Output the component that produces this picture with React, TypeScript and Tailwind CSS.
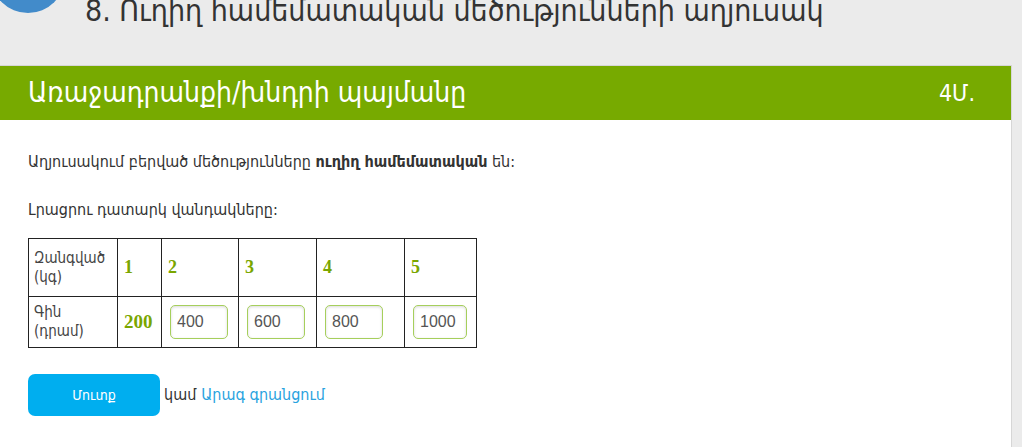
import React from "react";

const ARM = { fontFamily: '"DejaVu Sans Condensed", "DejaVu Sans", sans-serif' };

const AMOUNTS = ["1", "2", "3", "4", "5"];
const PRICES = ["400", "600", "800", "1000"];
const COL_W = ["w-[44px]", "w-[77px]", "w-[78px]", "w-[88px]", "w-[72px]"];

export default function App() {
  return (
    <div className="w-[1022px] h-[447px] overflow-hidden bg-[#ebebeb]" style={ARM}>
      <header className="relative flex items-start h-[65px]">
        <div className="absolute left-[-9px] top-[-61px] w-[74px] h-[74px] rounded-full bg-[#428bca]" />
        <h1 className="pl-[85px] -mt-[8px] text-[30px] leading-[38px] font-normal text-[#333] whitespace-nowrap">
          8. Ուղիղ համեմատական մեծությունների աղյուսակ
        </h1>
      </header>

      <section className="w-[1012px] border-r border-[#d6d6d6] bg-white">
        <div className="flex items-center justify-between h-[55px] pl-[28px] pr-[36px] bg-[#77aa00] border-t border-[#d6d6d6] text-white">
          <span className="text-[28px]">Առաջադրանքի/խնդրի պայմանը</span>
          <span className="text-[23px]">4Մ.</span>
        </div>

        <div className="px-[28px] pt-[32px] pb-[40px] text-[#333] text-[16px]">
          <p className="leading-[20px]">
            Աղյուսակում բերված մեծությունները <b>ուղիղ համեմատական</b> են:
          </p>
          <p className="leading-[20px] mt-[28px]">Լրացրու դատարկ վանդակները:</p>

          <table className="mt-[18px] border-collapse">
            <tbody>
              <tr className="h-[58px]">
                <td className="w-[89px] border border-[#222] px-[5px] text-[15px] leading-[19px] text-[#444]">
                  Զանգված
                  <br />
                  (կգ)
                </td>
                {AMOUNTS.map((a, i) => (
                  <td
                    key={a}
                    className={`border border-[#222] px-[6px] font-bold text-[18px] text-[#7aa600] ${COL_W[i]}`}
                    style={{ fontFamily: '"Liberation Serif", serif' }}
                  >
                    {a}
                  </td>
                ))}
              </tr>
              <tr className="h-[51px]">
                <td className="border border-[#222] px-[5px] text-[15px] leading-[19px] text-[#444]">
                  Գին
                  <br />
                  (դրամ)
                </td>
                <td
                  className="border border-[#222] px-[6px] font-bold text-[19px] text-[#7aa600]"
                  style={{ fontFamily: '"Liberation Serif", serif' }}
                >
                  200
                </td>
                {PRICES.map((p, i) => (
                  <td key={p} className="border border-[#222] px-[8px]">
                    <input
                      readOnly
                      value={p}
                      className={`h-[34px] px-[6px] rounded-[5px] border border-[#a6cf5c] shadow-[inset_0_1px_3px_rgba(0,0,0,0.15)] text-[16px] text-[#555] outline-none ${
                        i === 3 ? "w-[54px]" : "w-[58px]"
                      }`}
                      style={{ fontFamily: '"Liberation Sans", sans-serif' }}
                    />
                  </td>
                ))}
              </tr>
            </tbody>
          </table>

          <div className="flex items-center mt-[26px]">
            <button className="w-[132px] h-[42px] rounded-[7px] bg-[#00aeef] text-white text-[14px]">Մուտք</button>
            <span className="ml-[4px] text-[#333]">կամ</span>
            <a className="ml-[5px] text-[#29a3e0]">Արագ գրանցում</a>
          </div>
        </div>
      </section>
    </div>
  );
}
